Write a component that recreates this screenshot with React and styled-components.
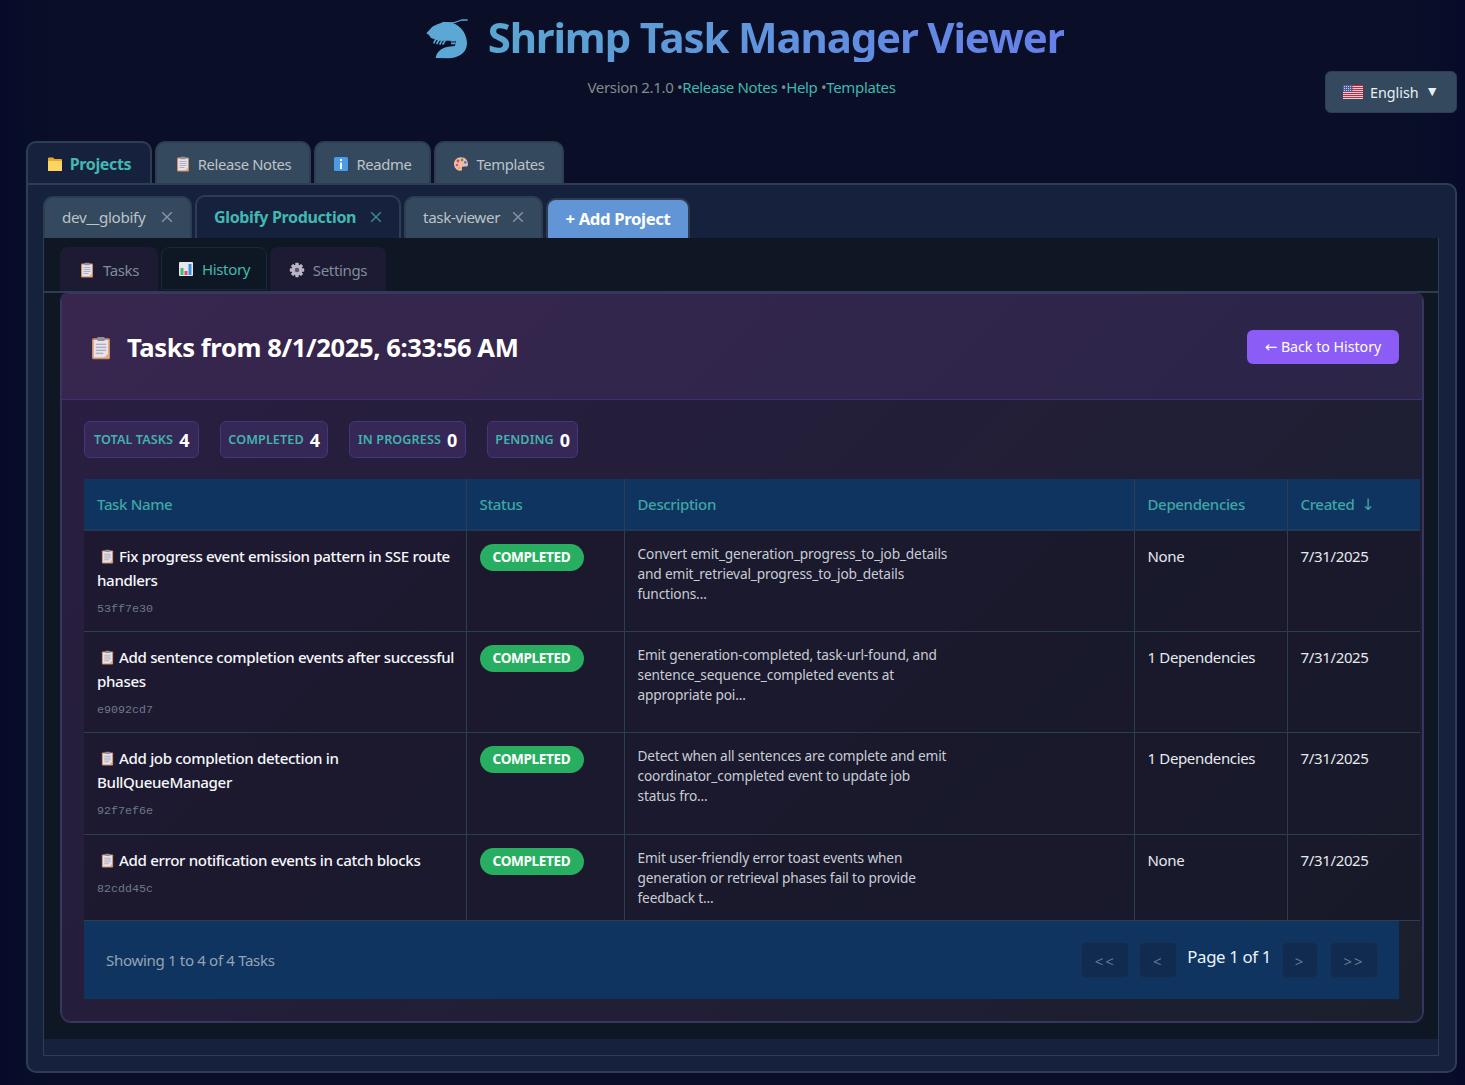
import React from "react";
import styled, { createGlobalStyle } from "styled-components";

const GlobalStyle = createGlobalStyle`
  html, body { margin: 0; padding: 0; }
  body {
    background: linear-gradient(90deg, #060b2a 0%, #0a0f27 4%, #0a0f27 96%, #070b2a 100%);
    color: #e0e0e0;
    font-family: "Noto Sans", "Open Sans", sans-serif;
    letter-spacing: -0.35px;
  }
  * { box-sizing: border-box; }
`;

const Page = styled.div`
  height: 1085px;
  padding: 0 8px 12px 26px;
  display: flex;
  flex-direction: column;
  overflow: hidden;
`;

const Header = styled.header`
  position: relative;
  flex: none;
  height: 141px;
  display: flex;
  flex-direction: column;
  align-items: center;
`;

const TitleRow = styled.div`
  display: flex;
  align-items: center;
  gap: 9px;
  margin-top: 10px;
`;

const Title = styled.h1`
  margin: -2px 0 0;
  font-size: 42px;
  line-height: 50px;
  font-weight: 700;
  letter-spacing: -1.16px;
  background: linear-gradient(135deg, #5aa8d0 0%, #667eea 100%);
  -webkit-background-clip: text;
  background-clip: text;
  color: transparent;
`;

const Version = styled.div`
  margin-top: 12px;
  font-size: 15px;
  line-height: 20px;
  color: #7f8c8d;
  white-space: pre;
`;

const VersionLink = styled.a`
  color: #3fb8af;
`;

const Lang = styled.button`
  position: absolute;
  top: 71px;
  right: 0;
  width: 132px;
  height: 42px;
  display: flex;
  align-items: center;
  padding: 0 17px 0 17px;
  background: #34495e;
  border: 1px solid #2c3e50;
  border-radius: 6px;
  color: #e8f0f5;
  font: inherit;
  font-size: 14.3px;
`;

const LangLabel = styled.span`
  margin-left: 7px;
  flex: 1;
  text-align: left;
`;

const Caret = styled.span`
  font-size: 14px;
  margin-top: -4px;
`;

const TabBar = styled.div`
  flex: none;
  display: flex;
  gap: 3px;
  align-items: flex-end;
`;

const MainTab = styled.div`
  height: 42px;
  width: ${(p) => p.$w}px;
  display: flex;
  align-items: center;
  justify-content: center;
  gap: 7px;
  padding-top: 2px;
  font-size: ${(p) => (p.$active ? 16 : 14.8)}px;
  font-weight: ${(p) => (p.$active ? 700 : 400)};
  color: ${(p) => (p.$active ? "#43b8b0" : "#bdc3c7")};
  background: ${(p) => (p.$active ? "#16213e" : "#34495e")};
  border: 2px solid #2c3e50;
  border-bottom: none;
  border-radius: 10px 10px 0 0;
`;

const Panel = styled.main`
  flex: 1;
  display: flex;
  flex-direction: column;
  background: #16213e;
  border: 2px solid #2c3e50;
  border-radius: 0 10px 10px 10px;
  padding: 10px 16px 15px 15px;
`;

const ProjectTab = styled.div`
  height: ${(p) => (p.$active ? 43 : 42)}px;
  width: ${(p) => p.$w}px;
  display: flex;
  align-items: center;
  justify-content: space-between;
  padding: 0 17px 2px;
  font-size: ${(p) => (p.$active ? 16 : 15.2)}px;
  font-weight: ${(p) => (p.$active ? 700 : 400)};
  color: ${(p) => (p.$active ? "#43b8b0" : "#bdc3c7")};
  background: ${(p) => (p.$active ? "#16213e" : "#34495e")};
  border: 2px solid #2c3e50;
  border-bottom: none;
  border-radius: 10px 10px 0 0;
`;

const CloseX = styled.span`
  display: flex;
  color: ${(p) => (p.$active ? "#3a8d8a" : "#8796a3")};
`;

const AddTab = styled.div`
  height: 40px;
  width: 144px;
  display: flex;
  align-items: center;
  justify-content: center;
  padding-bottom: 2px;
  font-size: 16.7px;
  font-weight: 700;
  color: #fff;
  background: #6295d6;
  border: 2px solid #2c3e50;
  border-bottom: none;
  border-radius: 10px 10px 0 0;
`;

const Content = styled.section`
  flex: 1;
  display: flex;
  flex-direction: column;
  border: 1px solid #2c3e50;
  border-top: none;
  padding-bottom: 16px;
`;

const Dark = styled.div`
  flex: 1;
  background: #0f1624;
  padding: 9px 0 17px;
  display: flex;
  flex-direction: column;
`;

const SubTabs = styled.div`
  flex: none;
  display: flex;
  gap: 3px;
  padding: 0 16px;
  height: 46px;
  border-bottom: 2px solid #2c3e50;
`;

const SubTab = styled.div`
  width: ${(p) => p.$w}px;
  height: ${(p) => (p.$active ? 43 : 44)}px;
  display: flex;
  align-items: center;
  justify-content: center;
  gap: 8px;
  padding-top: ${(p) => (p.$active ? 1 : 2)}px;
  font-size: 15px;
  color: ${(p) => (p.$active ? "#43b8b0" : "#7f8c9b")};
  background: ${(p) => (p.$active ? "#0e1724" : "#1d1b33")};
  border: ${(p) => (p.$active ? "1px solid #1c2638" : "none")};
  border-radius: 8px 8px 0 0;
`;

const Card = styled.div`
  flex: 1;
  margin: 0 15px 0 17px;
  border: 1px solid #40306e;
  box-shadow: 0 0 0 1px #2c3e50;
  border-radius: 8px 8px 10px 10px;
  background: linear-gradient(135deg, #2a1e42 0%, #1a1f2d 100%);
`;

const CardHead = styled.div`
  height: 106px;
  display: flex;
  align-items: center;
  justify-content: space-between;
  padding: 2px 23px 0 27px;
  background: linear-gradient(135deg, #38264f 0%, #2b2548 100%);
  border-bottom: 1px solid #40306e;
`;

const CardTitle = styled.h2`
  display: flex;
  align-items: center;
  gap: 14px;
  margin: 0;
  color: #fff;
  font-size: 25.6px;
  font-weight: 700;
  letter-spacing: -0.4px;
`;

const BackButton = styled.button`
  width: 152px;
  height: 34px;
  margin-top: -2px;
  background: #8b5cf6;
  border: none;
  border-radius: 6px;
  color: #fff;
  font: inherit;
  font-size: 14.2px;
`;

const Arrow = styled.span`
  font-family: "DejaVu Sans", sans-serif;
  font-size: 1.05em;
  line-height: 1;
  letter-spacing: 0;
`;

const CardBody = styled.div`
  padding: 21px 23px 22px 22px;
`;

const Stats = styled.div`
  display: flex;
  gap: 21px;
  margin-bottom: 21px;
`;

const Stat = styled.div`
  height: 37px;
  width: ${(p) => p.$w}px;
  display: flex;
  align-items: center;
  justify-content: center;
  gap: 6px;
  background: #352857;
  border: 1px solid #46357a;
  border-radius: 6px;
`;

const StatLabel = styled.span`
  font-size: 12.6px;
  font-weight: 600;
  letter-spacing: 0.1px;
  color: #43b3ad;
  text-transform: uppercase;
`;

const StatValue = styled.span`
  font-size: 18px;
  font-weight: 700;
  color: #fff;
`;

const Table = styled.table`
  width: 1336px;
  table-layout: fixed;
  border-collapse: collapse;
`;

const Th = styled.th`
  height: 51px;
  padding: 0 13px;
  text-align: left;
  font-size: 15px;
  font-weight: 500;
  color: #3ea6a4;
  background: #0f3460;
  border-bottom: 2px solid #1e3a5a;
  & + & { border-left: 1px solid #2c3e50; }
`;

const Td = styled.td`
  padding: 13px 13px 12px;
  vertical-align: top;
  background: rgba(20, 20, 36, 0.5);
  border-bottom: 1px solid #2c3e50;
  & + & { border-left: 1px solid #2c3e50; }
`;

const TaskName = styled.div`
  font-size: 15.1px;
  font-weight: 500;
  line-height: 24px;
  color: #f5f7fa;
  white-space: nowrap;
`;

const TaskIcon = styled.span`
  display: inline-block;
  margin: 0 4px 0 3px;
  vertical-align: -2px;
`;

const TaskId = styled.div`
  margin: 8px 0 ${(p) => (p.$tall ? 2 : 1)}px;
  height: 18px;
  font-family: "Liberation Mono", monospace;
  font-size: 11.7px;
  line-height: 18px;
  letter-spacing: 0;
  color: #6d7a88;
`;

const Badge = styled.div`
  display: flex;
  align-items: center;
  justify-content: center;
  width: 104px;
  height: 27px;
  padding-bottom: 3px;
  background: #27ae60;
  border-radius: 14px;
  color: #fff;
  font-size: 13.6px;
  font-weight: 700;
`;

const Description = styled.div`
  font-size: 13.7px;
  line-height: 20px;
  letter-spacing: -0.15px;
  color: #c7cdd4;
`;

const Plain = styled.div`
  font-size: 15px;
  line-height: 24px;
  color: #e6e9ee;
`;

const Pagination = styled.div`
  height: 78px;
  display: flex;
  align-items: center;
  justify-content: space-between;
  padding: 0 21px 0 22px;
  background: #0f3460;
`;

const Showing = styled.span`
  font-size: 15.1px;
  color: #94a3b3;
`;

const Pager = styled.div`
  display: flex;
  align-items: center;
  gap: 10px;
`;

const PageBtn = styled.button`
  flex: none;
  width: ${(p) => p.$w}px;
  height: 36px;
  padding: 2px 0 0;
  background: #112a4f;
  border: 1px solid #173252;
  border-radius: 6px;
  color: #66788f;
  font: inherit;
  font-size: 15px;
  letter-spacing: 2px;
`;

const LastBtn = styled(PageBtn)`
  margin-left: 2px;
`;

const PageText = styled.span`
  margin: -8px 1px 0 0;
  font-size: 16.8px;
  color: #eaf2fa;
`;

const Shrimp = () => (
  <svg width="60" height="55" viewBox="0 0 180 165">
    <path
      d="M22 70 L40 50 C60 38 85 33 100 38 C128 48 145 75 144 102 C142 130 118 144 88 145 L50 144 C52 126 66 114 88 110 L108 108 L110 92 L60 92 L36 84 L30 75 Z"
      fill="#5aa8d3"
    />
    <path d="M70 37 C90 42 115 36 128 30 L146 30" fill="none" stroke="#5aa8d3" strokeWidth="4" />
    <g stroke="#5aa8d3" strokeWidth="5" fill="none">
      <path d="M44 100 L52 85" />
      <path d="M53 102 L61 87" />
      <path d="M62 104 L70 89" />
      <path d="M71 104 L79 90" />
      <path d="M95 92 L108 92 M96 100 L108 100" />
    </g>
  </svg>
);

const Clipboard = ({ size = 16 }) => (
  <svg width={size} height={size} viewBox="0 0 16 16" style={{ display: "block" }}>
    <rect x="2" y="1.5" width="12" height="14" rx="1" fill="#cf8f5c" />
    <rect x="3.1" y="2.6" width="9.8" height="11.8" fill="#e6e3ee" />
    <rect x="5.5" y="0.7" width="5" height="2.6" rx="0.6" fill="#8f8f99" />
    <path d="M4.5 5.5h7M4.5 7.5h7M4.5 9.5h7M4.5 11.5h5" stroke="#a09fab" strokeWidth="0.8" />
    <path d="M10 14.4 L12.9 11.6 V14.4 Z" fill="#e0ac82" />
  </svg>
);

const Folder = () => (
  <svg width="16" height="16" viewBox="0 0 16 16" style={{ display: "block" }}>
    <path d="M1 2.5 a1 1 0 0 1 1-1 h4 l1.5 1.5 H14 a1 1 0 0 1 1 1 V15 H1 Z" fill="#e8a82e" />
    <path d="M1 5 h14 V14.3 a0.7 0.7 0 0 1-0.7 0.7 H1.7 A0.7 0.7 0 0 1 1 14.3 Z" fill="#fcd462" />
  </svg>
);

const Info = () => (
  <svg width="16" height="16" viewBox="0 0 16 16" style={{ display: "block" }}>
    <rect x="1" y="1" width="14" height="14" rx="1.5" fill="#4a9be8" />
    <rect x="7" y="3" width="2" height="2" fill="#fff" />
    <rect x="7" y="6.5" width="2" height="6.5" fill="#fff" />
  </svg>
);

const Palette = () => (
  <svg width="16" height="16" viewBox="0 0 16 16" style={{ display: "block" }}>
    <path
      d="M8 1.2 C3.8 1.2 1 4.2 1 8 c0 3.8 3 6.8 6.4 6.8 1.6 0 1.9-1 1.5-2 -0.5-1.2 0.3-2.2 1.6-2.2 H13 c1.3 0 2-0.9 2-2.4 C15 4 12.2 1.2 8 1.2 Z"
      fill="#f6b9a4"
    />
    <circle cx="5" cy="5" r="1.4" fill="#d8463f" />
    <circle cx="9" cy="3.9" r="1.3" fill="#3fa24a" />
    <circle cx="12.3" cy="6.4" r="1.3" fill="#3c7fd6" />
    <circle cx="3.9" cy="9" r="1.3" fill="#9b5bc4" />
    <circle cx="6" cy="12" r="1.2" fill="#e8b030" />
  </svg>
);

const Chart = () => (
  <svg width="16" height="16" viewBox="0 0 16 16" style={{ display: "block" }}>
    <rect x="1" y="1" width="14" height="14" rx="1" fill="#e6e8ee" />
    <rect x="2.5" y="7" width="3" height="7" fill="#47b86a" />
    <rect x="6.5" y="10" width="3" height="4" fill="#e8467a" />
    <rect x="10.5" y="3" width="3" height="11" fill="#3d8fe0" />
  </svg>
);

const Gear = () => (
  <svg width="16" height="16" viewBox="0 0 16 16" style={{ display: "block" }}>
    <g fill="#b9b4c6">
      <circle cx="8" cy="8" r="5.4" />
      {[0, 45, 90, 135].map((a) => (
        <rect key={a} x="6.3" y="0.8" width="3.4" height="14.4" rx="0.6" transform={`rotate(${a} 8 8)`} />
      ))}
    </g>
    <circle cx="8" cy="8" r="2.2" fill="#57546b" />
  </svg>
);

const Flag = () => (
  <svg width="20" height="14" viewBox="0 0 20 14" style={{ display: "block" }}>
    <rect width="20" height="14" fill="#f4f4f4" />
    {[0, 2, 4, 6, 8, 10, 12].map((y) => (
      <rect key={y} y={y} width="20" height="1.2" fill="#c8283c" />
    ))}
    <rect width="9.5" height="7" fill="#4f5d92" />
    <path d="M1 1.5h8M1 3.5h8M1 5.5h8" stroke="#e8e8f0" strokeWidth="0.8" strokeDasharray="1 1" />
  </svg>
);

const Cross = () => (
  <svg width="12" height="12" viewBox="0 0 12 12">
    <path d="M1.2 1.2 L10.8 10.8 M10.8 1.2 L1.2 10.8" stroke="currentColor" strokeWidth="1.4" />
  </svg>
);

const tasks = [
  {
    name: ["Fix progress event emission pattern in SSE route", "handlers"],
    id: "53ff7e30",
    desc: ["Convert emit_generation_progress_to_job_details", "and emit_retrieval_progress_to_job_details", "functions..."],
    deps: "None",
  },
  {
    name: ["Add sentence completion events after successful", "phases"],
    id: "e9092cd7",
    desc: ["Emit generation-completed, task-url-found, and", "sentence_sequence_completed events at", "appropriate poi..."],
    deps: "1 Dependencies",
  },
  {
    name: ["Add job completion detection in", "BullQueueManager"],
    id: "92f7ef6e",
    desc: ["Detect when all sentences are complete and emit", "coordinator_completed event to update job", "status fro..."],
    deps: "1 Dependencies",
    tall: true,
  },
  {
    name: ["Add error notification events in catch blocks"],
    id: "82cdd45c",
    desc: ["Emit user-friendly error toast events when", "generation or retrieval phases fail to provide", "feedback t..."],
    deps: "None",
  },
];

const lines = (items) =>
  items.map((line, i) => (
    <React.Fragment key={line}>
      {i > 0 && <br />}
      {line}
    </React.Fragment>
  ));

const App = () => {
  return (
    <Page>
      <GlobalStyle />
      <Header>
        <TitleRow>
          <Shrimp />
          <Title>Shrimp Task Manager Viewer</Title>
        </TitleRow>
        <Version>
          {"Version 2.1.0 •"}
          <VersionLink>Release Notes</VersionLink>
          {" •"}
          <VersionLink>Help</VersionLink>
          {" •"}
          <VersionLink>Templates</VersionLink>
        </Version>
        <Lang>
          <Flag />
          <LangLabel>English</LangLabel>
          <Caret>▼</Caret>
        </Lang>
      </Header>

      <TabBar>
        <MainTab $w={126} $active>
          <Folder />
          Projects
        </MainTab>
        <MainTab $w={156}>
          <Clipboard />
          Release Notes
        </MainTab>
        <MainTab $w={117}>
          <Info />
          Readme
        </MainTab>
        <MainTab $w={130}>
          <Palette />
          Templates
        </MainTab>
      </TabBar>

      <Panel>
        <TabBar>
          <ProjectTab $w={149}>
            dev__globify
            <CloseX>
              <Cross />
            </CloseX>
          </ProjectTab>
          <ProjectTab $w={206} $active>
            Globify Production
            <CloseX $active>
              <Cross />
            </CloseX>
          </ProjectTab>
          <ProjectTab $w={139}>
            task-viewer
            <CloseX>
              <Cross />
            </CloseX>
          </ProjectTab>
          <AddTab>+ Add Project</AddTab>
        </TabBar>

        <Content>
          <Dark>
            <SubTabs>
              <SubTab $w={98}>
                <Clipboard />
                Tasks
              </SubTab>
              <SubTab $w={106} $active>
                <Chart />
                History
              </SubTab>
              <SubTab $w={116}>
                <Gear />
                Settings
              </SubTab>
            </SubTabs>

            <Card>
              <CardHead>
                <CardTitle>
                  <Clipboard size={24} />
                  Tasks from 8/1/2025, 6:33:56 AM
                </CardTitle>
                <BackButton>
                  <Arrow>←</Arrow> Back to History
                </BackButton>
              </CardHead>
              <CardBody>
                <Stats>
                  <Stat $w={115}>
                    <StatLabel>Total Tasks</StatLabel>
                    <StatValue>4</StatValue>
                  </Stat>
                  <Stat $w={108}>
                    <StatLabel>Completed</StatLabel>
                    <StatValue>4</StatValue>
                  </Stat>
                  <Stat $w={117}>
                    <StatLabel>In Progress</StatLabel>
                    <StatValue>0</StatValue>
                  </Stat>
                  <Stat $w={91}>
                    <StatLabel>Pending</StatLabel>
                    <StatValue>0</StatValue>
                  </Stat>
                </Stats>

                <Table>
                  <colgroup>
                    <col style={{ width: 382 }} />
                    <col style={{ width: 158 }} />
                    <col style={{ width: 510 }} />
                    <col style={{ width: 153 }} />
                    <col style={{ width: 133 }} />
                  </colgroup>
                  <thead>
                    <tr>
                      <Th>Task Name</Th>
                      <Th>Status</Th>
                      <Th>Description</Th>
                      <Th>Dependencies</Th>
                      <Th>
                        Created&nbsp; <Arrow>↓</Arrow>
                      </Th>
                    </tr>
                  </thead>
                  <tbody>
                    {tasks.map((task) => (
                      <tr key={task.id}>
                        <Td>
                          <TaskName>
                            <TaskIcon>
                              <Clipboard size={15} />
                            </TaskIcon>
                            {lines(task.name)}
                          </TaskName>
                          <TaskId $tall={task.tall}>{task.id}</TaskId>
                        </Td>
                        <Td>
                          <Badge>COMPLETED</Badge>
                        </Td>
                        <Td>
                          <Description>{lines(task.desc)}</Description>
                        </Td>
                        <Td>
                          <Plain>{task.deps}</Plain>
                        </Td>
                        <Td>
                          <Plain>7/31/2025</Plain>
                        </Td>
                      </tr>
                    ))}
                  </tbody>
                </Table>

                <Pagination>
                  <Showing>Showing 1 to 4 of 4 Tasks</Showing>
                  <Pager>
                    <PageBtn $w={48}>&lt;&lt;</PageBtn>
                    <PageBtn $w={38}>&lt;</PageBtn>
                    <PageText>Page 1 of 1</PageText>
                    <PageBtn $w={36}>&gt;</PageBtn>
                    <LastBtn $w={48}>&gt;&gt;</LastBtn>
                  </Pager>
                </Pagination>
              </CardBody>
            </Card>
          </Dark>
        </Content>
      </Panel>
    </Page>
  );
};

export default App;
